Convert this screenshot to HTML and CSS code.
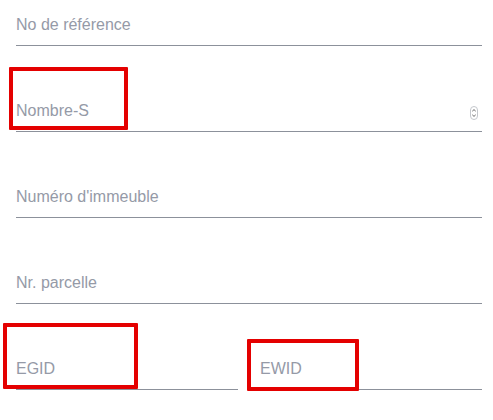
FILE: index.html
```html
<!DOCTYPE html>
<html lang="fr">
<head>
<meta charset="utf-8">
<title>Formulaire</title>
<link rel="stylesheet" href="styles.css">
</head>
<body>
<div class="page">
  <div class="form">
    <div class="field first"><span class="ph">No de référence</span></div>
    <div class="field"><span class="ph">Nombre-S</span>
      <svg class="spin" width="8" height="14" viewBox="0 0 8 14">
        <rect x="0.5" y="0.5" width="7" height="13" rx="3.5" fill="#fff" stroke="#c4c7cc"/>
        <path d="M2.3 5.2 L4 3.6 L5.7 5.2" fill="none" stroke="#555" stroke-width="0.9"/>
        <path d="M2.3 8.8 L4 10.4 L5.7 8.8" fill="none" stroke="#555" stroke-width="0.9"/>
      </svg>
    </div>
    <div class="field"><span class="ph">Numéro d'immeuble</span></div>
    <div class="field"><span class="ph">Nr. parcelle</span></div>
    <div class="row">
      <div class="field"><span class="ph">EGID</span></div>
      <div class="field"><span class="ph">EWID</span></div>
    </div>
  </div>
  <div class="mark mark-nombre"></div>
  <div class="mark mark-egid"></div>
  <div class="mark mark-ewid"></div>
</div>
</body>
</html>
```
FILE: styles.css
```css
html, body {
  margin: 0;
  padding: 0;
  background: #fff;
}
body {
  font-family: "Liberation Sans", Arial, sans-serif;
  font-size: 16px;
}
.page {
  position: relative;
  width: 493px;
  height: 420px;
  overflow: hidden;
}
.form {
  display: flex;
  flex-direction: column;
  padding: 0 11px 0 16px;
}
.field {
  height: 75px;
  padding-bottom: 10px;
  border-bottom: 1px solid #8c919b;
  display: flex;
  align-items: flex-end;
  justify-content: space-between;
}
.field.first {
  height: 35px;
}
.ph {
  color: #959aa7;
  line-height: 20px;
}
.spin {
  margin: 0 4px 1px 0;
  display: block;
}
.row {
  display: grid;
  grid-template-columns: 1fr 1fr;
  column-gap: 22px;
}
.mark {
  position: absolute;
  border: 4px solid #e40000;
  border-radius: 1px;
  box-sizing: border-box;
}
.mark-nombre {
  left: 9px;
  top: 67px;
  width: 119px;
  height: 63px;
}
.mark-egid {
  left: 3px;
  top: 323px;
  width: 135px;
  height: 66px;
}
.mark-ewid {
  left: 247px;
  top: 339px;
  width: 112px;
  height: 52px;
}
```
